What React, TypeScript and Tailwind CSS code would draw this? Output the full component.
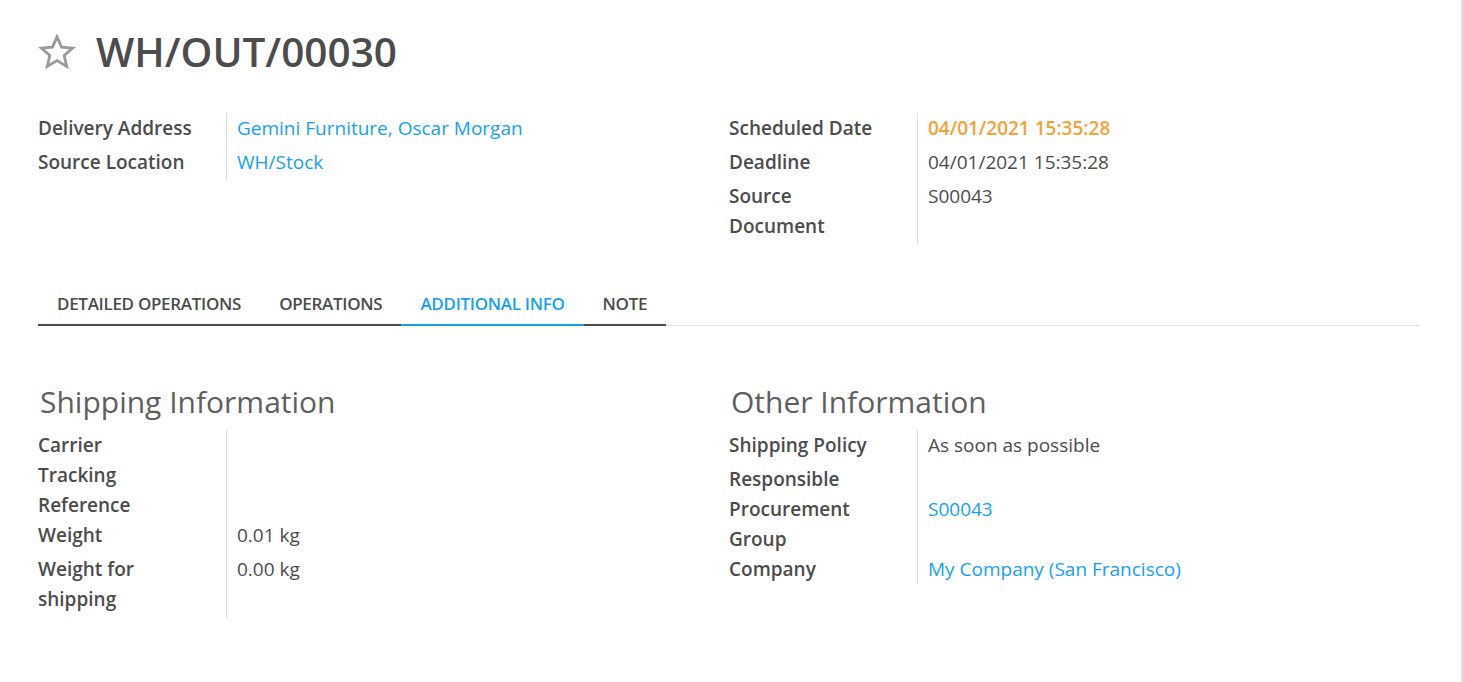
import React from "react"

type Field = {
    label: string
    value?: string
    tone?: "link" | "warn" | "plain"
    pad?: boolean
}

const toneClass = {
    link: "text-[#17a0f2]",
    warn: "text-[#f5a23a] font-semibold",
    plain: "text-[#4c4c4c]",
}

const FieldGroup = ({ fields }: { fields: Field[] }) => (
    <div className="grid grid-cols-[189px_1fr] content-start">
        {fields.map((f) => (
            <React.Fragment key={f.label}>
                <div className={`border-r border-[#dcdcdc] font-semibold text-[#4c4c4c] ${f.pad ? "pb-1" : ""}`}>
                    <div className="max-w-[159px]">{f.label}</div>
                </div>
                <div className={`pl-[10px] ${toneClass[f.tone ?? "plain"]} ${f.pad ? "pb-1" : ""}`}>
                    {f.value}
                </div>
            </React.Fragment>
        ))}
    </div>
)

const StarIcon = () => (
    <svg width="38" height="36" viewBox="0 0 24 23" fill="none" stroke="#9a9a9a" strokeWidth="1.8" strokeLinejoin="miter">
        <path d="M12 1.8l2.9 6.6 7.1.6-5.4 4.7 1.6 7-6.2-3.7-6.2 3.7 1.6-7L2 9l7.1-.6z" />
    </svg>
)

const tabs = ["DETAILED OPERATIONS", "OPERATIONS", "ADDITIONAL INFO", "NOTE"]

export default function App() {
    return (
        <div className="flex min-h-[682px] bg-white text-[19px] leading-[30px] text-[#4c4c4c]" style={{ fontFamily: "'Open Sans', 'Noto Sans', sans-serif" }}>
            <div className="w-[1461px] pl-[38px] pr-[41px]">
                <div className="flex items-center pt-[30px]">
                    <StarIcon />
                    <h1 className="ml-[20px] text-[40.5px] font-semibold leading-[44px] text-[#4c4c4c]">WH/OUT/00030</h1>
                </div>

                <div className="mt-[39px] grid grid-cols-2 items-start">
                    <FieldGroup
                        fields={[
                            { label: "Delivery Address", value: "Gemini Furniture, Oscar Morgan", tone: "link", pad: true },
                            { label: "Source Location", value: "WH/Stock", tone: "link", pad: true },
                        ]}
                    />
                    <FieldGroup
                        fields={[
                            { label: "Scheduled Date", value: "04/01/2021 15:35:28", tone: "warn", pad: true },
                            { label: "Deadline", value: "04/01/2021 15:35:28", pad: true },
                            { label: "Source Document", value: "S00043", pad: true },
                        ]}
                    />
                </div>

                <div className="mt-[35px] flex border-b border-[#dee2e6]">
                    {tabs.map((t) => (
                        <div
                            key={t}
                            className={`-mb-px border-b-2 px-[19px] pt-[12px] pb-[8px] text-[17px] font-semibold leading-[24px] tracking-[-0.3px] ${
                                t === "ADDITIONAL INFO" ? "border-[#17a0f2] text-[#17a0f2]" : "border-[#4c4c4c] text-[#4c4c4c]"
                            }`}
                        >
                            {t}
                        </div>
                    ))}
                </div>

                <div className="mt-[56px] grid grid-cols-2 items-start">
                    <div>
                        <h2 className="ml-[2px] text-[30px] leading-[40px] text-[#5f5f5f]">Shipping Information</h2>
                        <div className="mt-[8px]">
                            <FieldGroup
                                fields={[
                                    { label: "Carrier" },
                                    { label: "Tracking Reference" },
                                    { label: "Weight", value: "0.01 kg", pad: true },
                                    { label: "Weight for shipping", value: "0.00 kg", pad: true },
                                ]}
                            />
                        </div>
                    </div>
                    <div>
                        <h2 className="ml-[2px] text-[30px] leading-[40px] text-[#5f5f5f]">Other Information</h2>
                        <div className="mt-[8px]">
                            <FieldGroup
                                fields={[
                                    { label: "Shipping Policy", value: "As soon as possible", pad: true },
                                    { label: "Responsible" },
                                    { label: "Procurement Group", value: "S00043", tone: "link" },
                                    { label: "Company", value: "My Company (San Francisco)", tone: "link" },
                                ]}
                            />
                        </div>
                    </div>
                </div>
            </div>
            <div className="w-[2px] bg-[#dde2e7]" />
        </div>
    )
}
